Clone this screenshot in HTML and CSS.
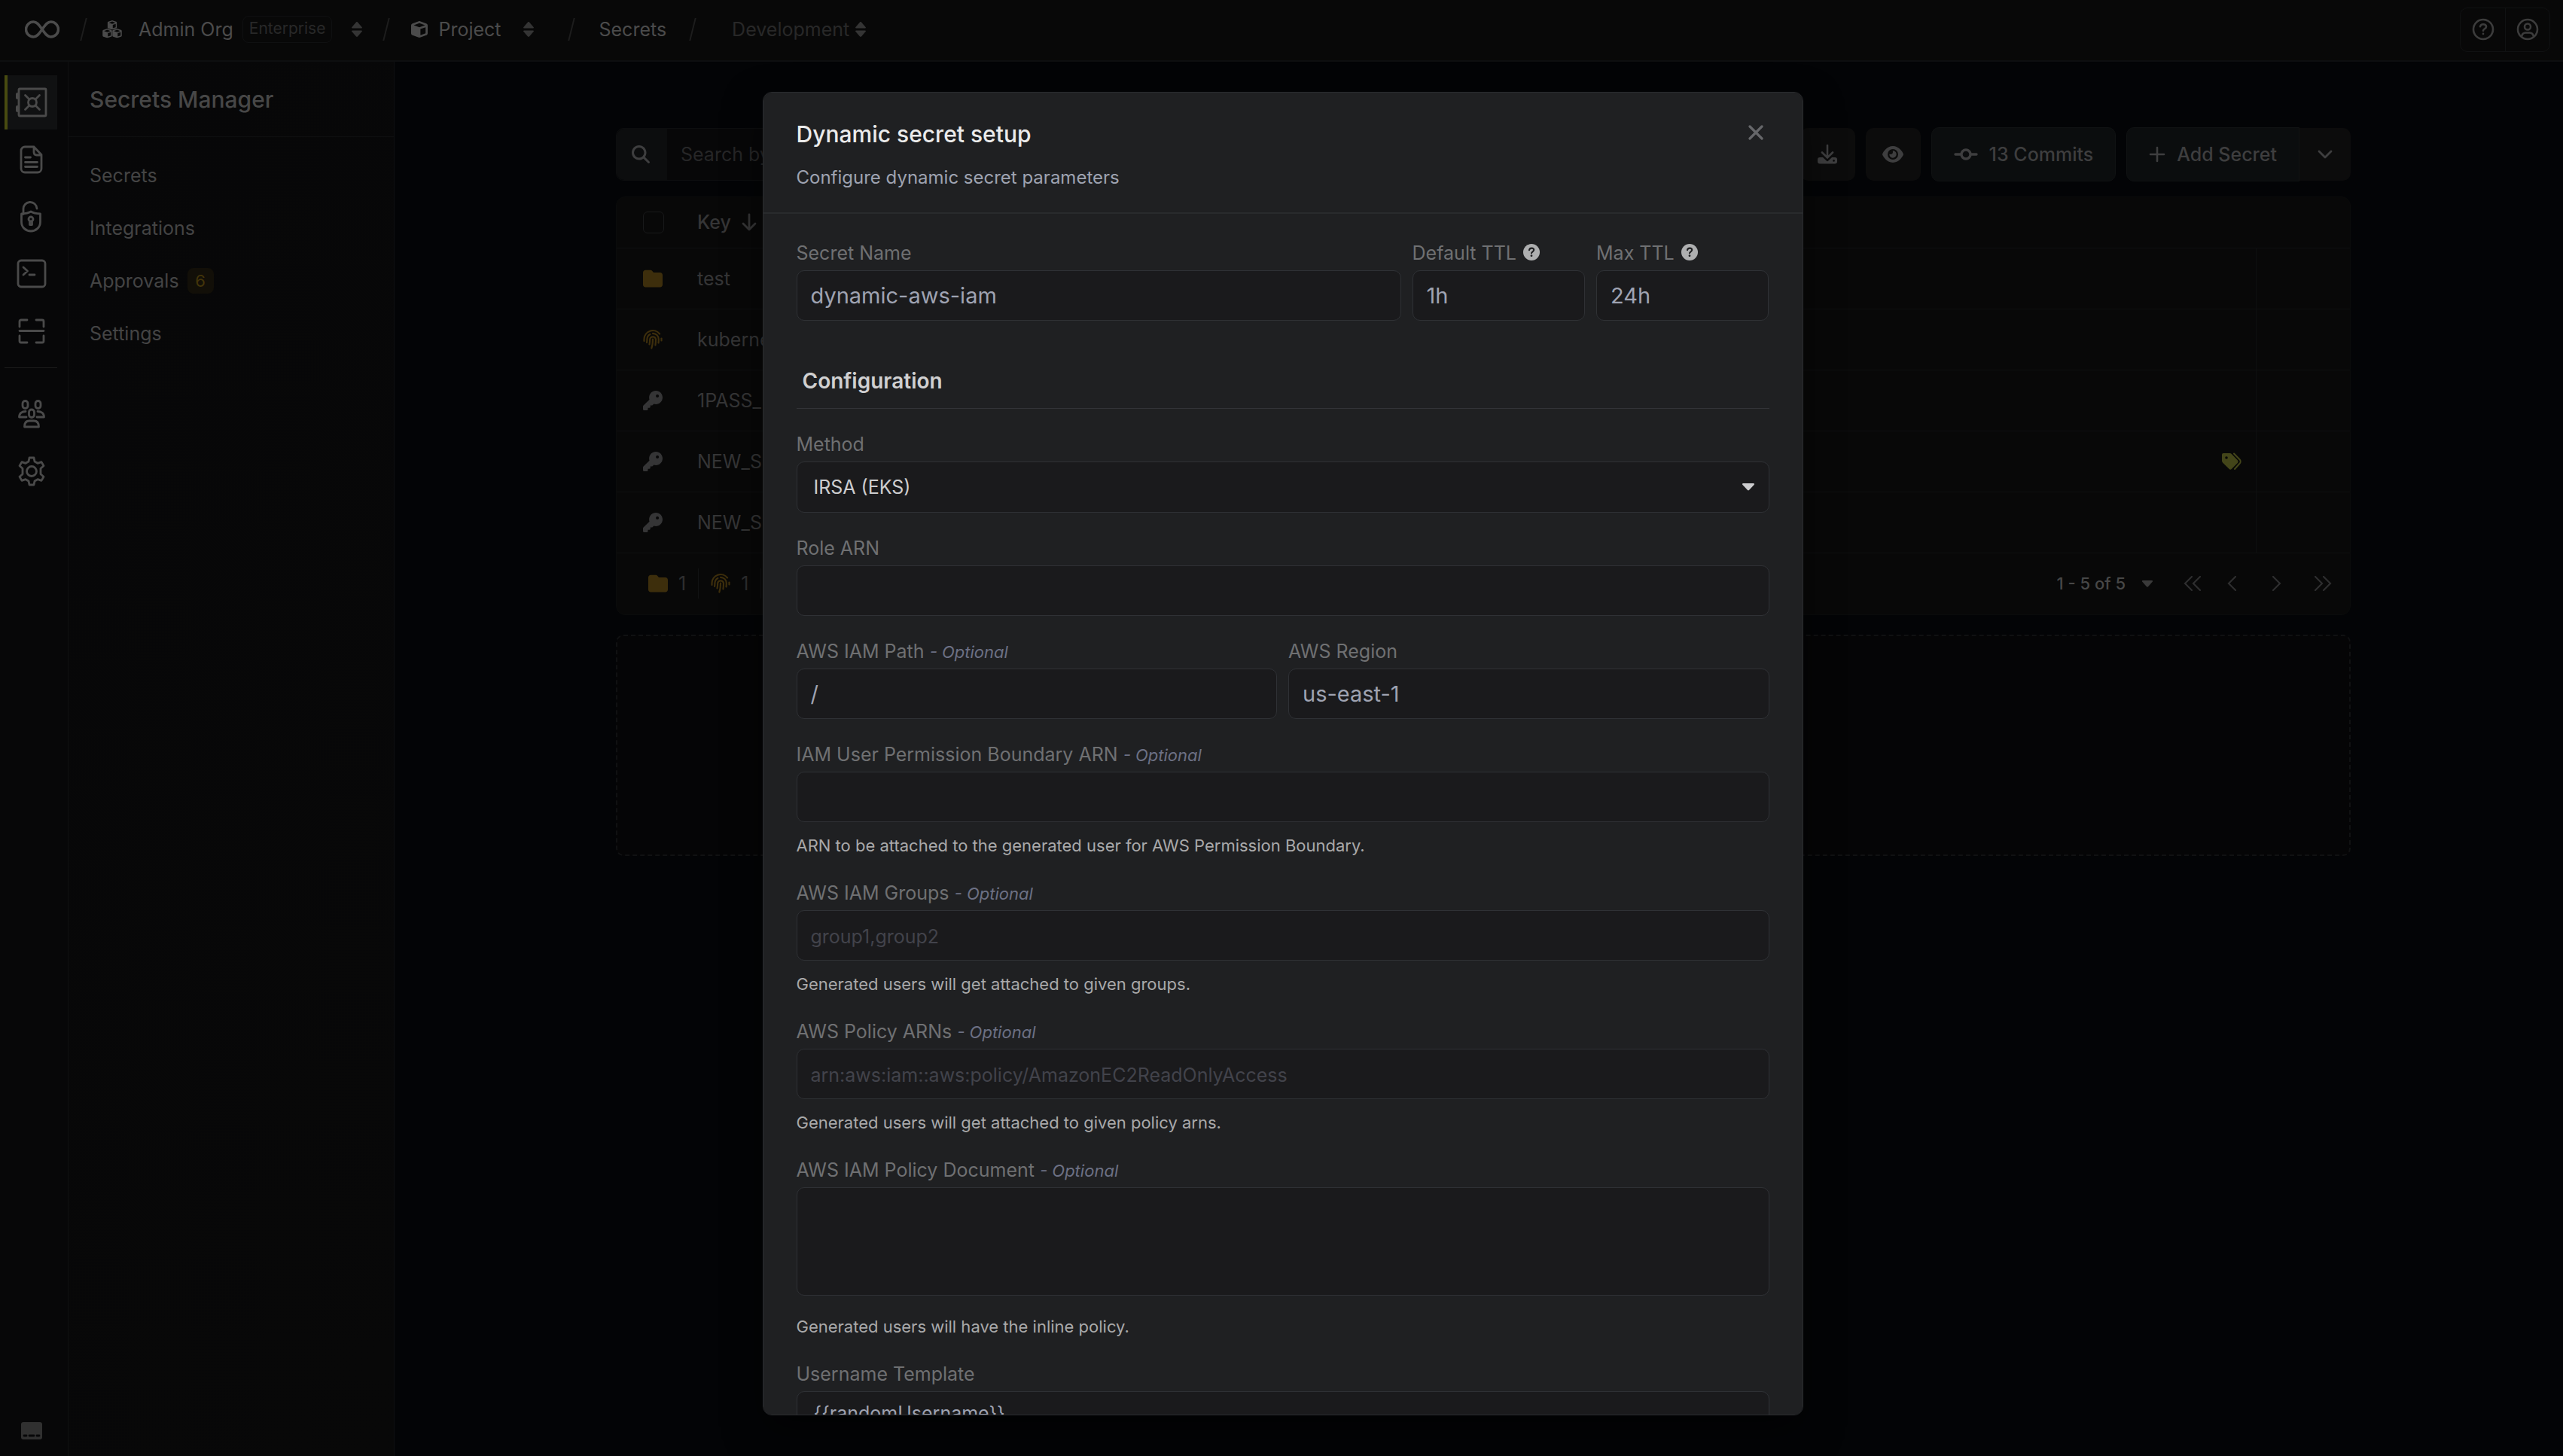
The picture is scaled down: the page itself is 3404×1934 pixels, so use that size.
FILE: index.html
```html
<!doctype html>
<html lang="en">

<head>
  <meta charset="UTF-8">
  <title>Secrets Manager</title>
  <link rel="stylesheet" href="styles.css">
</head>

<body>
  <svg class="sprite" aria-hidden="true">
    <symbol id="i-cube" viewBox="0 0 512 512">
      <path d="M234.5 5.7c13.9-5 29.1-5 43.1 0l192 68.6C495 83.4 512 107.5 512 134.6V377.4c0 27-17 51.2-42.5 60.3l-192 68.6c-13.9 5-29.1 5-43.1 0l-192-68.6C17 428.6 0 404.5 0 377.4V134.6c0-27 17-51.2 42.5-60.3l192-68.6zM256 66L82.3 128 256 190l173.7-62L256 66zm32 368.6l160-57.1v-188L288 246.6v188z"/>
    </symbol>
    <symbol id="i-sort" viewBox="0 0 14 20">
      <path d="M7 0c.4 0 .7.1 1 .4l5.6 6.500c.7.8.3 1.600-.7 1.600H1.100C.1 8.500-.3 7.700.4 6.900L6 .4C6.300.1 6.600 0 7 0zM7 20c-.4 0-.7-.1-1-.4L.4 13.100c-.7-.8-.3-1.600.7-1.600h11.800c1 0 1.400.8.7 1.600L8 19.600c-.3.3-.6.4-1 .4z"/>
    </symbol>
    <symbol id="i-folder" viewBox="0 0 512 512">
      <path d="M64 480H448c35.300 0 64-28.700 64-64V160c0-35.300-28.700-64-64-64H288c-10.100 0-19.600-4.700-25.600-12.800L243.200 57.600C231.100 41.500 212.100 32 192 32H64C28.700 32 0 60.700 0 96V416c0 35.300 28.700 64 64 64z"/>
    </symbol>
    <symbol id="i-key" viewBox="0 0 512 512">
      <path d="M336 352c97.200 0 176-78.800 176-176S433.200 0 336 0S160 78.800 160 176c0 18.700 2.900 36.800 8.300 53.700L7 391c-4.500 4.500-7 10.600-7 17v80c0 13.300 10.700 24 24 24h80c13.300 0 24-10.700 24-24V448h40c13.300 0 24-10.700 24-24V384h40c6.400 0 12.500-2.500 17-7l33.300-33.300c16.900 5.400 35 8.300 53.700 8.300zM376 96a40 40 0 1 1 0 80 40 40 0 1 1 0-80z"/>
    </symbol>
    <symbol id="i-finger" viewBox="0 0 26 26">
      <g fill="none" stroke="currentColor" stroke-width="2.200" stroke-linecap="round">
        <path d="M1.500 15v-2.500a11.500 11.500 0 0 1 20.500-7"/>
        <path d="M24.500 11.500v3"/>
        <path d="M5 17c.4-1.500.4-3 .4-4.500a7.800 7.800 0 0 1 4-6.500"/>
        <path d="M13 4.800a7.800 7.800 0 0 1 7.800 7.700c0 2 0 3.500-.3 5"/>
        <path d="M8.500 19.500c.6-2.500.7-4.500.7-7a4 4 0 0 1 7.800 0c0 3 0 5-.6 8"/>
        <path d="M13 12.500c0 4.500-.2 8-1.700 12"/>
      </g>
    </symbol>
    <symbol id="i-help" viewBox="0 0 22 22">
      <path fill="#aeafb0" d="M11 0a11 11 0 1 0 0 22 11 11 0 0 0 0-22z"/>
      <path fill="none" stroke="#1f2022" stroke-width="2.100" stroke-linecap="round" d="M8 8.200c.2-1.700 1.500-2.600 3.200-2.600 1.800 0 3 1 3 2.500 0 2.100-3.200 2.200-3.200 4.200"/>
      <circle fill="#1f2022" cx="11" cy="15.700" r="1.400"/>
    </symbol>
  </svg>

  <header class="topbar">
    <a class="logo" href="#" aria-label="Home">
      <svg width="46" height="24" viewBox="0 0 46 24" fill="none" stroke="currentColor" stroke-width="3.500"><path d="M23 12C19 6.500 16.500 2 11.500 2a10 10 0 0 0 0 20C16.500 22 19 17.500 23 12S29.500 2 34.500 2a10 10 0 0 1 0 20C29.500 22 27 17.500 23 12z"/></svg>
    </a>
    <span class="slash"></span>
    <a class="crumb org" href="#">
      <svg width="26" height="24" viewBox="0 0 26 24"><use href="#i-cube" x="6.500" y="0" width="13" height="12.500"/><use href="#i-cube" x="0" y="11" width="13" height="12.500"/><use href="#i-cube" x="13" y="11" width="13" height="12.500"/></svg>
      <span>Admin Org</span>
    </a>
    <span class="plan">Enterprise</span>
    <button class="sort" aria-label="Switch organization"><svg width="14" height="20"><use href="#i-sort"/></svg></button>
    <span class="slash"></span>
    <a class="crumb project" href="#">
      <svg width="22" height="22"><use href="#i-cube"/></svg>
      <span>Project</span>
    </a>
    <button class="sort" aria-label="Switch project"><svg width="14" height="20"><use href="#i-sort"/></svg></button>
    <span class="slash wide"></span>
    <a class="crumb section" href="#">Secrets</a>
    <span class="slash"></span>
    <button class="crumb env">Development <svg width="14" height="20"><use href="#i-sort"/></svg></button>
    <div class="account">
      <button aria-label="Help">
        <svg width="30" height="30" viewBox="0 0 30 30" fill="none" stroke="currentColor" stroke-width="2.600" stroke-linecap="round"><circle cx="15" cy="15" r="13"/><path d="M11 11.200c.5-2 2-3 4-3 2.300 0 4 1.200 4 3.200 0 2.800-4 2.800-4 5.400M15 20.800v.2"/></svg>
      </button>
      <button aria-label="Account">
        <svg width="30" height="30" viewBox="0 0 30 30" fill="none" stroke="currentColor" stroke-width="2.600"><circle cx="15" cy="15" r="13"/><circle cx="15" cy="11.500" r="4"/><path d="M7 24.500c.6-3.500 3-5 5.500-5h5c2.500 0 4.900 1.500 5.500 5"/></svg>
      </button>
    </div>
  </header>

  <div class="layout">
    <nav class="rail" aria-label="Products">
      <a class="active" href="#" aria-label="Secrets Manager">
        <svg width="42" height="42" viewBox="0 0 42 42"><rect x="4" y="3" width="36" height="36" rx="1"/><path d="M2 10v5M2 27v5" stroke-width="4"/><circle cx="22" cy="21" r="5.500"/><path d="M12.500 11.500l5.500 5.500M31.500 11.500L26 17M12.500 30.500L18 25M31.500 30.500L26 25"/></svg>
      </a>
      <a href="#" aria-label="Documents">
        <svg width="42" height="42" viewBox="0 0 42 42"><path d="M12 4h12l10 10.500V33a5 5 0 0 1-5 5H12a5 5 0 0 1-5-5V9a5 5 0 0 1 5-5z M24 4v7c0 2.500 1 4 3.500 4H34M12.500 18h7M12.500 24.500h16M12.500 30.500h16"/></svg>
      </a>
      <a href="#" aria-label="Keys">
        <svg width="42" height="42" viewBox="0 0 42 42"><path d="M10 17.500V11a9 9 0 0 1 18-1M20 14c-4 2.500-8 2.800-12.500 3v11c0 7 6 12 12.500 12s12.500-5 12.500-12V17C28 16.800 24 16.500 20 14z"/><circle cx="20" cy="24" r="3"/><path d="M18.500 27v4.500h3V27"/></svg>
      </a>
      <a href="#" aria-label="Access">
        <svg width="42" height="42" viewBox="0 0 42 42"><rect x="3" y="3" width="36" height="35" rx="4"/><path d="M10 12l5.500 5-5.500 5M18 22h7"/></svg>
      </a>
      <a href="#" aria-label="Scanning">
        <svg width="42" height="42" viewBox="0 0 42 42"><path d="M5 15V8a2 2 0 0 1 2-2h8M27 6h8a2 2 0 0 1 2 2v7M5 27v7a2 2 0 0 0 2 2h8M27 36h8a2 2 0 0 0 2-2v-7M5 20.500h32"/></svg>
      </a>
      <hr>
      <a href="#" aria-label="Members">
        <svg width="42" height="42" viewBox="0 0 42 42"><rect x="9" y="3.500" width="7" height="10" rx="3.500"/><rect x="26" y="3.500" width="7" height="10" rx="3.500"/><rect x="17.500" y="15" width="7" height="10.500" rx="3.500"/><path d="M13 17.500c-5 0-8.500 2.500-8.500 7.500H14M29 17.500c5 0 8.500 2.500 8.500 7.500H28M11.500 38c0-6 3-8 6.500-8h6c3.500 0 6.500 2 6.500 8z"/></svg>
      </a>
      <a href="#" aria-label="Project settings">
        <svg width="42" height="42" viewBox="0 0 42 42"><path d="M18 3h6l1 5 4 2.300 5-1.700 3 5.200-4 3.500v7.400l4 3.500-3 5.200-5-1.700L25 34l-1 5h-6l-1-5-4-2.300-5 1.700-3-5.200 4-3.500v-7.400l-4-3.500 3-5.200 5 1.700L17 8z"/><circle cx="21" cy="21" r="6.500"/></svg>
      </a>
      <a class="dock" href="#" aria-label="Toggle panel">
        <svg width="42" height="42" viewBox="0 0 42 42"><path fill="currentColor" stroke="none" d="M10 10h22a3 3 0 0 1 3 3v17a3 3 0 0 1-3 3H10a3 3 0 0 1-3-3V13a3 3 0 0 1 3-3z"/><path class="cut" d="M11 28h3M18 28h6M28 28h3"/></svg>
      </a>
    </nav>

    <aside class="sidebar">
      <h2>Secrets Manager</h2>
      <ul>
        <li><a href="#">Secrets</a></li>
        <li><a href="#">Integrations</a></li>
        <li><a href="#">Approvals <span class="badge">6</span></a></li>
        <li><a href="#">Settings</a></li>
      </ul>
    </aside>

    <main>
      <div class="content">
        <div class="toolbar">
          <label class="search">
            <span><svg width="24" height="24" viewBox="0 0 512 512"><path d="M416 208c0 45.900-14.900 88.300-40 122.700L502.600 457.400c12.500 12.500 12.500 32.800 0 45.300s-32.800 12.500-45.300 0L330.700 376c-34.400 25.200-76.800 40-122.700 40C93.100 416 0 322.900 0 208S93.100 0 208 0S416 93.100 416 208zM208 352a144 144 0 1 0 0-288 144 144 0 1 0 0 288z"/></svg></span>
            <input type="text" placeholder="Search by secret name" aria-label="Search">
          </label>
          <button class="tool" aria-label="Download">
            <svg width="26" height="26" viewBox="0 0 26 26"><path d="M0 20a3 3 0 0 1 3-3h4l4.500 4.300a2 2 0 0 0 3 0L19 17h4a3 3 0 0 1 3 3v2.500a3 3 0 0 1-3 3H3a3 3 0 0 1-3-3zM21.500 20a1.400 1.400 0 1 0 0 2.800 1.400 1.400 0 0 0 0-2.800z" fill-rule="evenodd"/><path d="M13 1v16M6 10.500l7 7 7-7" fill="none" stroke="currentColor" stroke-width="2.600" stroke-linecap="round"/></svg>
          </button>
          <button class="tool" aria-label="Show values">
            <svg width="28" height="26" viewBox="0 0 576 512"><path d="M288 32c-80.800 0-145.500 36.800-192.600 80.600C48.600 156 17.300 208 2.500 243.700c-3.300 7.900-3.300 16.700 0 24.600C17.300 304 48.600 356 95.400 399.400C142.500 443.200 207.200 480 288 480s145.500-36.800 192.600-80.600c46.800-43.500 78.100-95.400 93-131.100c3.300-7.900 3.300-16.700 0-24.600c-14.900-35.700-46.200-87.700-93-131.100C433.500 68.800 368.800 32 288 32zM144 256a144 144 0 1 1 288 0 144 144 0 1 1 -288 0zm144-64c0 35.300-28.700 64-64 64c-7.100 0-13.900-1.200-20.300-3.300c-5.500-1.800-11.900 1.600-11.700 7.400c.3 6.900 1.300 13.800 3.200 20.700c13.700 51.200 66.400 81.600 117.600 67.900s81.600-66.400 67.900-117.600c-11.100-41.500-47.800-69.400-88.600-71.100c-5.800-.2-9.200 6.100-7.400 11.700c2.100 6.400 3.300 13.200 3.300 20.300z"/></svg>
          </button>
          <button class="action">
            <svg width="32" height="18" viewBox="0 0 32 18" fill="none" stroke="currentColor" stroke-width="3.400" stroke-linecap="round"><circle cx="16" cy="9" r="6"/><path d="M2 9h7M23 9h7"/></svg>
            13 Commits
          </button>
          <div class="split">
            <button class="action">
              <svg width="22" height="22" viewBox="0 0 22 22" fill="none" stroke="currentColor" stroke-width="2.600" stroke-linecap="round"><path d="M11 2v18M2 11h18"/></svg>
              Add Secret
            </button>
            <button class="more" aria-label="More add options">
              <svg width="20" height="12" viewBox="0 0 20 12" fill="none" stroke="currentColor" stroke-width="2.800" stroke-linecap="round" stroke-linejoin="round"><path d="M2 2l8 8 8-8"/></svg>
            </button>
          </div>
        </div>

        <div class="panel">
          <table>
            <thead>
              <tr>
                <th class="mark"><input type="checkbox" aria-label="Select all"></th>
                <th colspan="3">Key <svg width="20" height="24" viewBox="0 0 20 24" fill="none" stroke="currentColor" stroke-width="2.800" stroke-linecap="round" stroke-linejoin="round"><path d="M10 2v20M2 14l8 8 8-8"/></svg></th>
              </tr>
            </thead>
            <tbody>
              <tr>
                <td class="mark gold"><svg width="26" height="26"><use href="#i-folder"/></svg></td>
                <td>test</td>
                <td class="tags"></td>
                <td class="end"></td>
              </tr>
              <tr>
                <td class="mark gold"><svg width="26" height="26"><use href="#i-finger"/></svg></td>
                <td>kubernetes</td>
                <td class="tags"></td>
                <td class="end"></td>
              </tr>
              <tr>
                <td class="mark"><svg width="26" height="26"><use href="#i-key"/></svg></td>
                <td>1PASS_KEY</td>
                <td class="tags"></td>
                <td class="end"></td>
              </tr>
              <tr>
                <td class="mark"><svg width="26" height="26"><use href="#i-key"/></svg></td>
                <td>NEW_SECRET</td>
                <td class="tags"><svg width="26" height="24" viewBox="0 0 26 24"><path fill-rule="evenodd" d="M2 1h8.500c.8 0 1.500.3 2 .8l8 8.200a3 3 0 0 1 0 4.200l-7.500 7.600a2.500 2.500 0 0 1-3.600 0L1 13.400C.4 12.800 0 12 0 11.300V3a2 2 0 0 1 2-2zM6 5.200a1.800 1.800 0 1 0 0 3.600 1.800 1.800 0 0 0 0-3.600z"/><path fill="none" stroke="currentColor" stroke-width="2" stroke-linecap="round" d="M16 1.500l7.500 7.700a4 4 0 0 1 0 5.600l-6.500 7.200"/></svg></td>
                <td class="end"></td>
              </tr>
              <tr>
                <td class="mark"><svg width="26" height="26"><use href="#i-key"/></svg></td>
                <td>NEW_SECRET_2</td>
                <td class="tags"></td>
                <td class="end"></td>
              </tr>
            </tbody>
          </table>
          <div class="summary">
            <span class="count"><svg class="gold" width="26" height="26"><use href="#i-folder"/></svg> 1</span>
            <span class="count"><svg class="gold" width="26" height="26"><use href="#i-finger"/></svg> 1</span>
            <span class="count"><svg width="26" height="26"><use href="#i-key"/></svg> 3</span>
            <div class="pager">
              <button class="range">1 - 5 of 5 <svg width="14" height="9" viewBox="0 0 14 9"><path d="M1 0h12c.9 0 1.300 1 .7 1.700L8 8.300c-.6.6-1.400.6-2 0L.3 1.700C-.3 1 .1 0 1 0z"/></svg></button>
              <button aria-label="First page"><svg width="24" height="20" viewBox="0 0 24 20"><path d="M12 1l-9 9 9 9M23 1l-9 9 9 9"/></svg></button>
              <button aria-label="Previous page"><svg width="24" height="20" viewBox="0 0 24 20"><path d="M12 1l-9 9 9 9"/></svg></button>
              <button aria-label="Next page"><svg width="24" height="20" viewBox="0 0 24 20"><path d="M4 1l9 9-9 9"/></svg></button>
              <button aria-label="Last page"><svg width="24" height="20" viewBox="0 0 24 20"><path d="M2 1l9 9-9 9M13 1l9 9-9 9"/></svg></button>
            </div>
          </div>
        </div>

        <div class="dropzone"></div>
      </div>
    </main>
  </div>

  <div class="overlay">
    <div class="modal" role="dialog" aria-modal="true" aria-labelledby="modal-title">
      <div class="modal-head">
        <div>
          <h1 id="modal-title">Dynamic secret setup</h1>
          <p>Configure dynamic secret parameters</p>
        </div>
        <button class="close" aria-label="Close">
          <svg width="20" height="20" viewBox="0 0 20 20" fill="none" stroke="currentColor" stroke-width="3.200" stroke-linecap="round"><path d="M2 2l16 16M18 2L2 18"/></svg>
        </button>
      </div>

      <form class="modal-body">
        <div class="row ttl">
          <div class="field">
            <label for="name">Secret Name</label>
            <input id="name" type="text" value="dynamic-aws-iam">
          </div>
          <div class="field">
            <label for="default-ttl">Default TTL <svg width="22" height="22"><use href="#i-help"/></svg></label>
            <input id="default-ttl" type="text" value="1h">
          </div>
          <div class="field">
            <label for="max-ttl">Max TTL <svg width="22" height="22"><use href="#i-help"/></svg></label>
            <input id="max-ttl" type="text" value="24h">
          </div>
        </div>

        <h3>Configuration</h3>

        <div class="field">
          <label for="method">Method</label>
          <div class="select">
            <select id="method">
              <option>IRSA (EKS)</option>
            </select>
            <svg width="16" height="10" viewBox="0 0 16 10"><path d="M1.200 0h13.600c1 0 1.500 1.200.8 1.900L9 9a1.500 1.500 0 0 1-2 0L.4 1.900C-.3 1.200.2 0 1.200 0z"/></svg>
          </div>
        </div>
        <div class="field">
          <label for="role">Role ARN</label>
          <input id="role" type="text">
        </div>
        <div class="row">
          <div class="field">
            <label for="path">AWS IAM Path <em>- Optional</em></label>
            <input id="path" type="text" value="/">
          </div>
          <div class="field">
            <label for="region">AWS Region</label>
            <input id="region" type="text" value="us-east-1">
          </div>
        </div>
        <div class="field">
          <label for="boundary">IAM User Permission Boundary ARN <em>- Optional</em></label>
          <input id="boundary" type="text">
          <p class="hint">ARN to be attached to the generated user for AWS Permission Boundary.</p>
        </div>
        <div class="field">
          <label for="groups">AWS IAM Groups <em>- Optional</em></label>
          <input id="groups" type="text" placeholder="group1,group2">
          <p class="hint">Generated users will get attached to given groups.</p>
        </div>
        <div class="field">
          <label for="arns">AWS Policy ARNs <em>- Optional</em></label>
          <input id="arns" type="text" placeholder="arn:aws:iam::aws:policy/AmazonEC2ReadOnlyAccess">
          <p class="hint">Generated users will get attached to given policy arns.</p>
        </div>
        <div class="field">
          <label for="document">AWS IAM Policy Document <em>- Optional</em></label>
          <textarea id="document"></textarea>
          <p class="hint">Generated users will have the inline policy.</p>
        </div>
        <div class="field">
          <label for="template">Username Template</label>
          <input id="template" class="template" type="text" value="{{randomUsername}}">
        </div>
      </form>
    </div>
  </div>
</body>

</html>
```

FILE: styles.css
```css
* {
  box-sizing: border-box;
}

body {
  display: flex;
  flex-direction: column;
  min-height: 100vh;
  margin: 0;
  overflow: hidden;
  background: #030406;
  color: #3e3e3f;
  font: 25px/36px Inter, sans-serif;
}

h1,
h2,
h3,
p,
ul {
  margin: 0;
  padding: 0;
  font-weight: normal;
}

ul {
  list-style: none;
}

a {
  color: inherit;
  text-decoration: none;
}

button,
input,
select,
textarea {
  margin: 0;
  padding: 0;
  border: 0;
  background: none;
  color: inherit;
  font: inherit;
}

svg {
  flex: none;
  fill: currentColor;
}

svg[fill="none"] {
  fill: none;
}

.sprite {
  display: none;
}

.gold {
  color: #3d2e0c;
}

/* top bar */
.topbar {
  display: flex;
  align-items: center;
  height: 82px;
  padding: 0 17px 2px 33px;
  border-bottom: 2px solid #0e0f10;
  background: #080808;
  color: #4b4b4b;
}

.logo,
.crumb,
.sort {
  display: flex;
  align-items: center;
}

.slash {
  width: 2px;
  height: 30px;
  margin: 0 24px 0 31px;
  background: #1d1d1d;
  transform: skewX(-14deg);
}

.slash.wide {
  margin: 0 36px 0 49px;
}

.org {
  gap: 22px;
}

.project {
  gap: 14px;
  margin-left: 8px;
}

.plan {
  height: 36px;
  margin: 0 26px 0 12px;
  padding: 0 8px;
  border: 1px solid #0f1011;
  border-radius: 8px;
  color: #282828;
  font-size: 21px;
  line-height: 32px;
}

.sort {
  color: #343434;
}

.project + .sort {
  margin-left: 29px;
}

.section + .slash {
  margin: 0 51px 0 34px;
}

.env {
  gap: 8px;
  color: #282828;
}

.env svg {
  color: #343434;
}

.account {
  display: flex;
  margin-left: auto;
  border: 1px solid #101112;
  border-radius: 10px;
}

.account button {
  display: grid;
  place-items: center;
  width: 59px;
  height: 57px;
  color: #3c3c3c;
}

.account button + button {
  border-left: 1px solid #101112;
}

/* navigation */
.layout {
  display: flex;
  flex: 1;
}

.rail {
  display: flex;
  flex-direction: column;
  gap: 4px;
  width: 91px;
  padding: 18px 14px 15px 6px;
  border-right: 1px solid #0f1011;
  background: #070708;
  color: #4a4a4a;
}

.rail a {
  display: grid;
  place-items: center;
  height: 72px;
  padding-right: 2px;
  border-left: 4px solid transparent;
}

.rail a.active {
  border-color: #484b10;
  background: #101112;
}

.rail svg {
  fill: none;
  stroke: currentColor;
  stroke-width: 2.8;
  stroke-linecap: round;
  stroke-linejoin: round;
}

.rail hr {
  width: 100%;
  margin: 8px 0 21px;
  border: 0;
  border-top: 1px solid #1c1c1c;
}

.rail .dock {
  height: 40px;
  margin-top: auto;
  color: #303030;
}

.rail .cut {
  stroke: #070708;
}

.sidebar {
  width: 433px;
  border-right: 1px solid #0f1011;
  background: linear-gradient(120deg, #070708, #080808);
}

.sidebar h2 {
  padding: 26px 28px 25px;
  border-bottom: 1px solid #0e0f10;
  color: #474747;
  font-size: 30px;
  font-weight: 500;
  line-height: 48px;
}

.sidebar ul {
  display: grid;
  gap: 34px;
  padding: 33px 28px;
  color: #444;
}

.sidebar li a {
  display: flex;
  align-items: center;
  gap: 11px;
}

.badge {
  width: 35px;
  height: 34px;
  border-radius: 8px;
  background: #120f08;
  color: #43350a;
  font-size: 22px;
  line-height: 34px;
  text-align: center;
}

/* secrets list */
main {
  flex: 1;
  padding: 87px 0 0 12px;
}

.content {
  max-width: 2304px;
  margin: 0 auto;
}

.toolbar {
  display: flex;
  align-items: center;
  gap: 14px;
  height: 72px;
}

.search {
  display: flex;
  flex: 1;
  height: 70px;
  border-radius: 10px;
  border: 1px solid #0d0e0f;
  background: #070708;
}

.search span {
  display: grid;
  place-items: center;
  width: 67px;
  border-radius: 10px 0 0 10px;
  background: #0c0d0e;
  padding-right: 4px;
}

.search input {
  flex: 1;
  padding-left: 18px;
}

.search input::placeholder {
  color: #262627;
}

.tool,
.more {
  display: grid;
  place-items: center;
  width: 73px;
  height: 70px;
  border-radius: 10px;
  background: #0c0c0c;
}

.action {
  display: flex;
  align-items: center;
  gap: 15px;
  height: 72px;
  padding: 0 29px;
  border: 1px solid #101213;
  border-radius: 10px;
  background: #0b0d0e;
  font-weight: 500;
}

.split {
  display: flex;
  align-items: center;
}

.split .action {
  border-radius: 10px 0 0 10px;
}

.more {
  width: 68px;
  border-radius: 0 10px 10px 0;
}

.panel {
  margin-top: 20px;
  border: 1px solid #0a0b0b;
  border-radius: 12px;
  background: #080808;
}

table {
  width: 100%;
  border-collapse: collapse;
  color: #353536;
}

th,
td {
  height: 81px;
  padding: 0;
  border-bottom: 1px solid #0e0f10;
  text-align: left;
}

th {
  height: 67px;
  font-weight: 500;
}

th svg {
  margin-left: 8px;
  vertical-align: -3px;
}

.mark {
  width: 107px;
  padding-left: 35px;
}

.mark svg {
  display: block;
}

th input {
  display: block;
  width: 28px;
  height: 29px;
  border: 1px solid #18191a;
  border-radius: 6px;
  appearance: none;
}

.tags {
  width: 45px;
  color: #434519;
}

.tags svg {
  display: block;
}

.end {
  width: 125px;
  border-left: 1px solid #0e0f10;
}

.summary {
  display: flex;
  align-items: center;
  height: 81px;
  padding: 0 13px 0 26px;
  color: #2e2e2f;
}

.count {
  display: flex;
  align-items: center;
  gap: 14px;
  height: 40px;
  padding: 0 16px;
  border-right: 1px solid #111213;
}

.pager {
  display: flex;
  align-items: center;
  gap: 12px;
  margin-left: auto;
}

.pager button {
  display: grid;
  place-items: center;
  width: 46px;
  height: 46px;
}

.pager button path {
  fill: none;
  stroke: currentColor;
  stroke-width: 2.2;
  stroke-linecap: round;
}

.pager .range {
  display: flex;
  gap: 22px;
  width: auto;
  margin-right: 17px;
  color: #474747;
  font-size: 22px;
  font-weight: 500;
}

.pager .range path {
  fill: #3a3a3a;
  stroke: none;
}

.dropzone {
  height: 294px;
  margin-top: 26px;
  border: 2px dashed #101112;
  border-radius: 10px;
  background: #050506;
}

/* modal */
.overlay {
  position: fixed;
  inset: 0;
  display: flex;
  justify-content: center;
  align-items: flex-start;
  padding: 122px 24px 54px 27px;
}

.modal {
  width: 100%;
  max-width: 1382px;
  max-height: 100%;
  overflow: auto;
  scrollbar-width: none;
  border: 1px solid #2a2c2f;
  border-radius: 12px;
  background: #1f2022;
  box-shadow: 0 20px 50px rgba(0, 0, 0, .5);
}

.modal-head {
  display: flex;
  justify-content: space-between;
  align-items: flex-start;
  padding: 31px 52px 28px 44px;
  border-bottom: 2px solid #292b2d;
}

.modal-head h1 {
  color: #ebebeb;
  font-size: 30px;
  font-weight: 500;
  line-height: 48px;
}

.modal-head p {
  margin-top: 16px;
  color: #9ea3b1;
  font-size: 24px;
}

.close {
  display: grid;
  margin-top: 12px;
  color: #66676a;
}

.modal-body {
  display: flex;
  flex-direction: column;
  gap: 29px;
  padding: 34px 44px 44px;
}

.row {
  display: grid;
  grid-template-columns: 1fr 1fr;
  gap: 15px;
}

.row.ttl {
  grid-template-columns: 7fr 2fr 2fr;
}

.field {
  min-width: 0;
}

.field label {
  display: block;
  height: 36px;
  margin-bottom: 5px;
  color: #6f7072;
}

.field label svg {
  margin-left: 2px;
  vertical-align: -1px;
}

.field em {
  color: #6c7084;
  font-size: 22px;
  line-height: 22px;
}

.field input,
.field select,
.field textarea {
  display: block;
  width: 100%;
  height: 67px;
  padding: 0 18px;
  border: 1px solid #2f3135;
  border-radius: 10px;
  background: #1a1a1c;
  color: #9fa3b2;
  font-size: 29px;
}

.field input::placeholder {
  color: #42434b;
  font-size: 25px;
}

.field textarea {
  height: 144px;
  margin-bottom: 26px;
  padding: 16px 18px;
  resize: none;
}

.field textarea + .hint {
  margin-top: 0;
}

.field .template {
  height: 58px;
  padding: 0 22px;
  font-size: 25px;
}

.select {
  display: flex;
  align-items: center;
}

.select select {
  height: 68px;
  padding: 0 22px;
  color: #cdcdcf;
  font-size: 25px;
  appearance: none;
}

.select svg {
  margin: 0 20px 0 -36px;
  color: #cdcdcf;
  pointer-events: none;
}

.hint {
  margin-top: 16px;
  color: #a9a9aa;
  font-size: 22px;
  line-height: 31px;
}

h3 {
  margin-top: 31px;
  padding: 0 8px 16px;
  border-bottom: 1px solid #333438;
  color: #d0d0d1;
  font-size: 28px;
  font-weight: 600;
  line-height: 40px;
}
```
